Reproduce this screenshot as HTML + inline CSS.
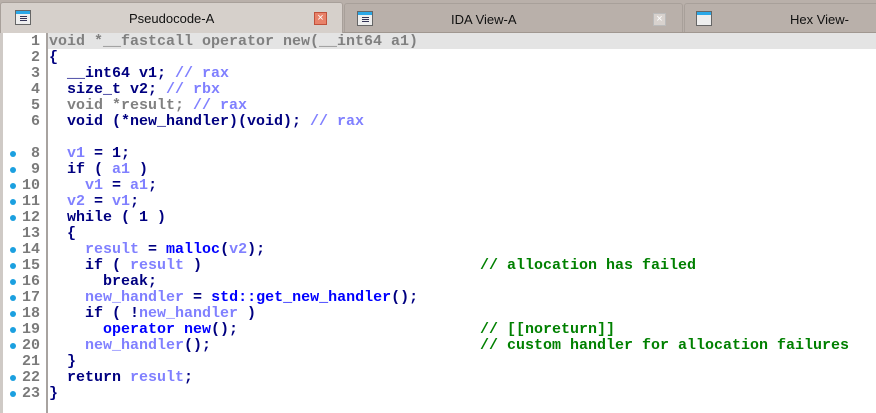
<!DOCTYPE html>
<html><head><meta charset="utf-8"><style>
body{margin:0;width:876px;height:413px;overflow:hidden;background:#fff;font-family:"Liberation Sans",sans-serif;position:relative}
.tabbar{position:absolute;left:0;top:0;width:876px;height:33px;background:#b9b0aa;border-bottom:1px solid #a09790;box-sizing:border-box}
.tab{position:absolute;top:3px;height:29px;border:1px solid #a8a09a;border-bottom:none;border-radius:3px 3px 0 0;box-sizing:border-box;font-size:13px;color:#111}
.tab.act{background:#d6d0cb;top:2px;height:31px}
.tab span{position:absolute;top:8px}
.ico{position:absolute;top:7px;width:16px;height:15px;border:1px solid #666;background:#eee;box-sizing:border-box}
.ico:before{content:"";position:absolute;left:0;top:0;right:0;height:3px;background:#2aa8e8}
.ico i{position:absolute;left:4px;top:5px;width:7px;height:1px;background:#335;box-shadow:0 2px #335,0 4px #335}
.x{position:absolute;top:9px;width:13px;height:13px;box-sizing:border-box;font-size:11px;line-height:11px;text-align:center;color:#fff}
.gut{position:absolute;left:0;top:33px;width:46px;height:380px;border-right:2px solid #a8a3a0;background:#fff}
.strip{position:absolute;left:0;top:33px;width:3px;height:380px;background:#cfcac6}
.hl{position:absolute;left:48px;top:33px;width:828px;height:16px;background:#e4e4e4}
.ln{position:absolute;left:0;width:40px;text-align:right;font:bold 15px/16px "Liberation Mono",monospace;color:#7a7a7a}
.dot{position:absolute;left:10px;width:6px;height:6px;border-radius:50%;background:#1ba0e0}
.code{position:absolute;left:49px;white-space:pre;font:bold 15px/16px "Liberation Mono",monospace;color:#000080}
.v{color:#8080ff}.g{color:#808080}.f{color:#0000ff}.c{color:#008000;position:absolute;left:431px;letter-spacing:0}
</style></head><body>
<div class="tabbar">
 <div class="tab act" style="left:0;width:343px"><div class="ico" style="left:14px"><i></i></div><span style="left:128px">Pseudocode-A</span><div class="x" style="left:313px;background:#e8826a;border:1px solid #c0503a">×</div></div>
 <div class="tab" style="left:344px;width:339px"><div class="ico" style="left:12px"><i></i></div><span style="left:106px">IDA View-A</span><div class="x" style="left:308px;background:#d8d2ce;border:1px solid #bbb">×</div></div>
 <div class="tab" style="left:684px;width:200px"><div class="ico" style="left:11px"></div><span style="left:105px">Hex View-</span></div>
</div>
<div class="gut"></div><div class="strip"></div><div class="hl"></div>
<div id="L"></div>
<script>
var lines=[
['<span class="g">void *__fastcall operator new(__int64 a1)</span>',0],
['{',0],
['  __int64 v1; <span class="v">// rax</span>',0],
['  size_t v2; <span class="v">// rbx</span>',0],
['  <span class="g">void *result; </span><span class="v">// rax</span>',0],
['  void (*new_handler)(void); <span class="v">// rax</span>',0],
['',0],
['  <span class="v">v1</span> = 1;',1],
['  if ( <span class="v">a1</span> )',1],
['    <span class="v">v1</span> = <span class="v">a1</span>;',1],
['  <span class="v">v2</span> = <span class="v">v1</span>;',1],
['  while ( 1 )',1],
['  {',0],
['    <span class="v">result</span> = <span class="f">malloc</span>(<span class="v">v2</span>);',1],
['    if ( <span class="v">result</span> )<span class="c">// allocation has failed</span>',1],
['      break;',1],
['    <span class="v">new_handler</span> = <span class="f">std::get_new_handler</span>();',1],
['    if ( !<span class="v">new_handler</span> )',1],
['      <span class="f">operator new</span>();<span class="c">// [[noreturn]]</span>',1],
['    <span class="v">new_handler</span>();<span class="c">// custom handler for allocation failures</span>',1],
['  }',0],
['  return <span class="v">result</span>;',1],
['}',1]];
var h='';
lines.forEach(function(l,i){var t=33+16*i;
h+='<div class="ln" style="top:'+(t+1)+'px">'+(i==6?'':i+1)+'</div>';
if(l[1])h+='<div class="dot" style="top:'+(t+6)+'px"></div>';
h+='<div class="code" style="top:'+(t+1)+'px">'+l[0]+'</div>';});
document.getElementById('L').innerHTML=h;
</script>
</body></html>
